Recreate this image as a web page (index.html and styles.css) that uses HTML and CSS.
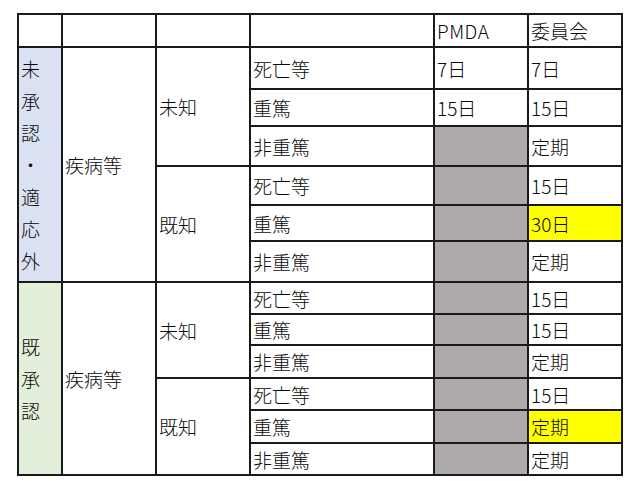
FILE: index.html
```html
<!DOCTYPE html>
<html lang="ja">
<head>
<meta charset="utf-8">
<link rel="stylesheet" href="styles.css">
</head>
<body>
<div class="sheet">
  <div class="c"></div>
  <div class="c"></div>
  <div class="c"></div>
  <div class="c"></div>
  <div class="c latin">PMDA</div>
  <div class="c">委員会</div>

  <div class="c blue vert g1"><span>未</span><span>承</span><span>認</span><span>・</span><span>適</span><span>応</span><span>外</span></div>
  <div class="c span6">疾病等</div>
  <div class="c span3">未知</div>
  <div class="c">死亡等</div>
  <div class="c">7日</div>
  <div class="c">7日</div>
  <div class="c">重篤</div>
  <div class="c">15日</div>
  <div class="c">15日</div>
  <div class="c">非重篤</div>
  <div class="c grey"></div>
  <div class="c">定期</div>
  <div class="c span3">既知</div>
  <div class="c">死亡等</div>
  <div class="c grey"></div>
  <div class="c">15日</div>
  <div class="c">重篤</div>
  <div class="c grey"></div>
  <div class="c yellow">30日</div>
  <div class="c">非重篤</div>
  <div class="c grey"></div>
  <div class="c">定期</div>

  <div class="c green vert g2"><span>既</span><span>承</span><span>認</span></div>
  <div class="c span6">疾病等</div>
  <div class="c span3">未知</div>
  <div class="c">死亡等</div>
  <div class="c grey"></div>
  <div class="c">15日</div>
  <div class="c">重篤</div>
  <div class="c grey"></div>
  <div class="c">15日</div>
  <div class="c">非重篤</div>
  <div class="c grey"></div>
  <div class="c">定期</div>
  <div class="c span3">既知</div>
  <div class="c">死亡等</div>
  <div class="c grey"></div>
  <div class="c">15日</div>
  <div class="c">重篤</div>
  <div class="c grey"></div>
  <div class="c yellow">定期</div>
  <div class="c">非重篤</div>
  <div class="c grey"></div>
  <div class="c">定期</div>
</div>
</body>
</html>
```
FILE: styles.css
```css
html, body {
  margin: 0;
  padding: 0;
  background: #ffffff;
}

body {
  font-family: "Noto Sans CJK JP", "Noto Sans", sans-serif;
  font-size: 19px;
  font-weight: 300;
  color: #0a0a0a;
}

.sheet {
  margin: 13px 0 0 17px;
  width: max-content;
  display: grid;
  grid-template-columns: 42px 92px 92px 182px 92px 92px;
  grid-template-rows: 31px 40px 35px 38px 37px 34px 39px 30px 29px 31px 30px 31px 30px;
  gap: 2px;
  padding: 2px;
  background: #1a1a1a;
}

.c {
  background: #ffffff;
  display: flex;
  align-items: center;
  padding-left: 2px;
  line-height: 1;
  white-space: nowrap;
  overflow: hidden;
}

.latin {
  letter-spacing: 0.5px;
}

.span6 { grid-row: span 6; }
.span3 { grid-row: span 3; }

.blue { background: #d9e1f2; }
.green { background: #e2efda; }
.grey { background: #aeaaaa; }
.yellow { background: #ffff00; }

.vert {
  flex-direction: column;
  justify-content: center;
  align-items: flex-start;
  padding-left: 2px;
}

.vert span {
  display: block;
  line-height: 32px;
  height: 32px;
}

.g1 { grid-row: span 6; }
.g2 { grid-row: span 6; }
```
